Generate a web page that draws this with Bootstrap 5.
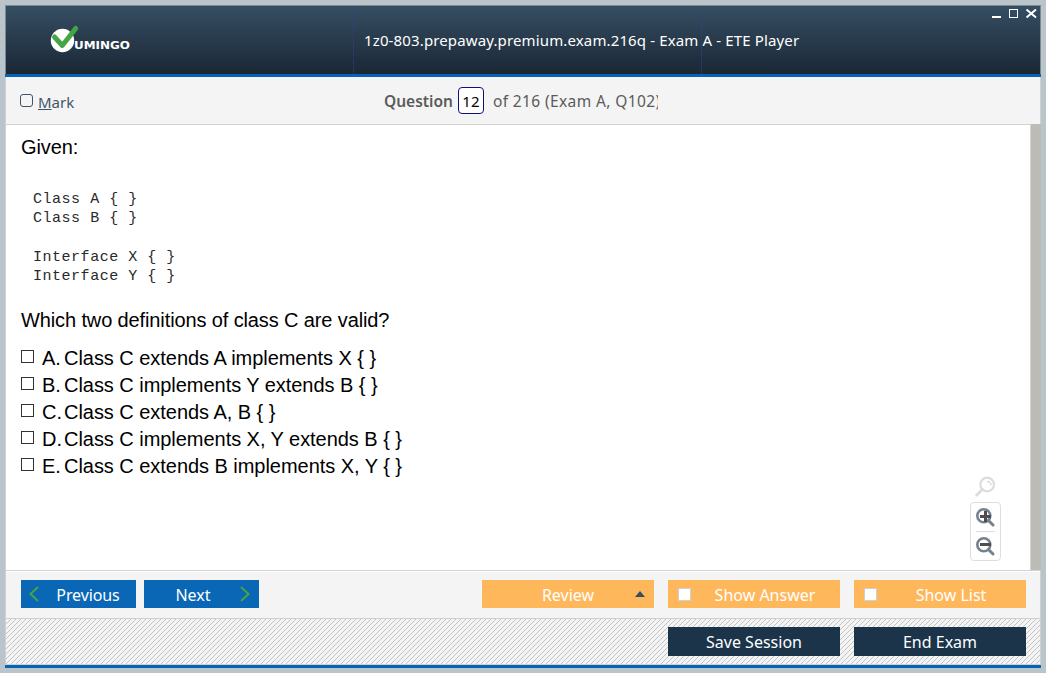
<!DOCTYPE html>
<html lang="en">
<head>
<meta charset="utf-8">
<meta name="viewport" content="width=device-width, initial-scale=1">
<title>ETE Player</title>
<link href="https://cdn.jsdelivr.net/npm/bootstrap@5.3.0/dist/css/bootstrap.min.css" rel="stylesheet">
<style>
  body { height: 100vh; background: #b9c5cb; padding: 5px; overflow: hidden; font-family: "Noto Sans", sans-serif; }
  .player { height: 663px; border-left: 1px solid #d0d2d2; border-right: 1px solid #d0d2d2; }
  .titlebar { height: 69px; border-top: 1px solid #7d8b8f; background: linear-gradient(#364e63, #1a2735); box-shadow: -1px 0 #7d8b8f, 1px 0 #7d8b8f; }
  .blue-line { height: 3px; background: #0664b4; margin: 0 -1px; }
  .title-cell { width: 348px; border-right: 1px dotted #34407f; }
  .brand-mark { display: block; margin: 17px 0 0 43px; }
  .exam-title { color: #fff; font-size: 15px; letter-spacing: .135px; line-height: 20px; padding: 24px 0 0 10px; white-space: nowrap; }
  .win-tools { top: 3px; right: 2px; }
  .question-bar { height: 48px; background: #f4f4f4; border-bottom: 1px solid #d2d2d2; color: #5b5b5b; font-size: 15.5px; line-height: 22px; padding-bottom: 1px; }
  .mark-toggle { width: 378px; padding-left: 14px; color: #3f546a; }
  .tick { width: 13px; height: 13px; border: 1px solid #333; background: #fff; flex: none; }
  .tick-mark { border-color: #3f546a; border-radius: 3px; background: transparent; margin: 1px 5px 0 0; }
  .mark-label { font-size: 15px; padding-top: 4px; }
  .q-word { padding-top: 2px; }
  .q-input { width: 26px; height: 27px; border: 1px solid #10107c; border-radius: 4px; background: #fff; color: #000; font-size: 15px; line-height: 27px; text-align: center; margin: 0 9px 0 5px; }
  .q-clip { width: 165px; overflow: hidden; white-space: nowrap; letter-spacing: .38px; padding-top: 2px; }
  .page-area { height: 446px; background: #fff; border-bottom: 1px solid #d2d2d2; font: 20px/27px "Liberation Sans", Arial, sans-serif; color: #000; }
  .page-text { padding: 9px 0 0 15px; }
  .snug { letter-spacing: -.12px; }
  .code-text { font: 15px/19.3px "Liberation Mono", monospace; letter-spacing: .52px; color: #2a2a2a; margin: 29px 0 21px 12px; overflow: visible; }
  .options { margin-top: 11px; letter-spacing: -.04px; }
  .options .tick { margin: 5px 8px 0 0; }
  .opt-letter { width: 22px; }
  .scroll-rail { width: 11px; background: #bcbbb6; border-left: 1px solid #d4d4d2; margin: -1px -1px 0 0; }
  .zoom-tools { width: 31px; margin: 350px 29px 0 0; }
  .zoom-tools svg { display: block; }
  .zoom-box { height: 59px; border: 1px solid #dedede; border-radius: 4px; margin-top: 5px; padding: 4px 5px 0; }
  .zoom-rule { height: 1px; background: #dcdcdc; margin: 4px 0; }
  .nav-strip { height: 47px; background: #f4f4f4; border-top: 1px solid #fff; padding: 8px 14px 0 15px; }
  .action-group { gap: 14px; }
  .session-strip { height: 47px; border-top: 1px solid #d0d0d0; border-bottom: 1px solid #d0d0d0; padding: 8px 14px 0 0; gap: 14px;
    background: #f4f4f4 url("data:image/svg+xml,%3Csvg xmlns='http://www.w3.org/2000/svg' width='5' height='5' shape-rendering='crispEdges'%3E%3Cpath fill='%23c3c3c3' d='M4 0h1v1H4zM3 1h1v1H3zM2 2h1v1H2zM1 3h1v1H1zM0 4h1v1H0z'/%3E%3C/svg%3E"); }
  .flat-btn { height: 28px; border: 0; border-radius: 0; padding: 0; color: #fff; font-size: 16px; line-height: 30px; position: relative; }
  .flat-btn:hover { color: #fff; }
  .nav-btn, .nav-btn:hover { width: 115px; background: #0967b6; }
  .prev-btn { padding-left: 19px; letter-spacing: -.1px; }
  .next-btn { padding-right: 17px; }
  .orange-btn, .orange-btn:hover { width: 172px; background: #ffb75c; }
  .has-box { padding-left: 22px; }
  .dark-btn, .dark-btn:hover { width: 172px; height: 29px; background: #1b344a; }
  .box-in { left: 10px; top: 8px; width: 13px; height: 13px; border: 1px solid #d0d0d0; background: #fff; }
  .chev { top: 6px; }
  .chev-left { left: 8px; }
  .chev-right { right: 9px; }
  .up-arrow { right: 9px; top: 11px; }
</style>
</head>
<body>
<div class="player d-flex flex-column">
  <header class="titlebar d-flex position-relative flex-shrink-0">
    <div class="title-cell flex-shrink-0">
      <svg class="brand-mark" width="84" height="34" viewBox="49 23 84 34">
        <circle cx="62.5" cy="40.5" r="11.7" fill="#fff"/>
        <path d="M54.5 37 L62.3 45.5 L75.7 28.5" fill="none" stroke="#45a545" stroke-width="5" stroke-linecap="round" stroke-linejoin="round"/>
        <text x="74" y="49" font-family="DejaVu Sans" font-weight="bold" font-size="9.6" textLength="56" lengthAdjust="spacingAndGlyphs" fill="#fff">UMINGO</text>
      </svg>
    </div>
    <div class="title-cell flex-shrink-0"><div class="exam-title">1z0-803.prepaway.premium.exam.216q - Exam A - ETE Player</div></div>
    <svg class="win-tools position-absolute" width="46" height="12" viewBox="0 0 46 12">
      <path d="M0 8h9" stroke="#fff" stroke-width="2"/>
      <rect x="17.5" y=".5" width="8" height="8" fill="none" stroke="#fff"/>
      <path d="M34.500 .5l9.500 8M44 .5l-9.500 8" stroke="#fff" stroke-width="2"/>
    </svg>
  </header>
  <div class="blue-line flex-shrink-0"></div>
  <div class="question-bar d-flex align-items-center flex-shrink-0">
    <div class="mark-toggle d-flex align-items-center"><span class="tick tick-mark"></span><span class="mark-label"><u>M</u>ark</span></div>
    <span class="q-word fw-semibold">Question</span>
    <span class="q-input">12</span>
    <span class="q-clip">of 216 (Exam A, Q102)</span>
  </div>
  <main class="page-area d-flex flex-shrink-0">
    <div class="page-text flex-grow-1">
      <div class="snug">Given:</div>
      <pre class="code-text">Class A { }
Class B { }

Interface X { }
Interface Y { }</pre>
      <div class="snug">Which two definitions of class C are valid?</div>
      <div class="options">
        <div class="d-flex"><span class="tick"></span><span class="opt-letter">A.</span><span>Class C extends A implements X { }</span></div>
        <div class="d-flex"><span class="tick"></span><span class="opt-letter">B.</span><span>Class C implements Y extends B { }</span></div>
        <div class="d-flex"><span class="tick"></span><span class="opt-letter">C.</span><span>Class C extends A, B { }</span></div>
        <div class="d-flex"><span class="tick"></span><span class="opt-letter">D.</span><span>Class C implements X, Y extends B { }</span></div>
        <div class="d-flex"><span class="tick"></span><span class="opt-letter">E.</span><span>Class C extends B implements X, Y { }</span></div>
      </div>
    </div>
    <div class="zoom-tools">
      <svg width="31" height="22" viewBox="0 0 31 22" fill="none" stroke="#dcdcdc" stroke-linecap="round">
        <circle cx="17.200" cy="9.500" r="6.800" stroke-width="2.200"/>
        <path d="M12.300 14.500L6.800 20" stroke-width="3"/>
        <path d="M17.500 6.500a3.500 3.500 0 0 1 3.500 3.500" stroke-width="1.500"/>
      </svg>
      <div class="zoom-box">
        <svg width="19" height="20" viewBox="0 0 19 20" fill="none">
          <circle cx="7.800" cy="8.700" r="6.500" stroke="#74828f" stroke-width="2.600"/>
          <path d="M12.500 13.500l4.500 4.500" stroke="#74828f" stroke-width="3" stroke-linecap="round"/>
          <path d="M4 9.500h11M9.500 4v11" stroke="#4e4e4e" stroke-width="3"/>
        </svg>
        <div class="zoom-rule"></div>
        <svg width="19" height="20" viewBox="0 0 19 20" fill="none">
          <circle cx="7.800" cy="8.700" r="6.500" stroke="#74828f" stroke-width="2.600"/>
          <path d="M12.500 13.500l4.500 4.500" stroke="#74828f" stroke-width="3" stroke-linecap="round"/>
          <path d="M4 8.500h11" stroke="#4e4e4e" stroke-width="3"/>
        </svg>
      </div>
    </div>
    <div class="scroll-rail"></div>
  </main>
  <footer>
    <div class="nav-strip d-flex justify-content-between">
      <div class="d-flex gap-2">
        <button class="btn flat-btn nav-btn prev-btn"><svg class="chev chev-left position-absolute" width="10" height="16" viewBox="0 0 10 16" fill="none" stroke="#45a545" stroke-width="2"><path d="M9 1L1.500 8 9 15"/></svg>Previous</button>
        <button class="btn flat-btn nav-btn next-btn">Next<svg class="chev chev-right position-absolute" width="10" height="16" viewBox="0 0 10 16" fill="none" stroke="#45a545" stroke-width="2"><path d="M1 1l7.500 7L1 15"/></svg></button>
      </div>
      <div class="action-group d-flex">
        <button class="btn flat-btn orange-btn">Review<svg class="up-arrow position-absolute" width="10" height="6" viewBox="0 0 10 6"><path d="M0 6L5 0l5 6z" fill="#364e63"/></svg></button>
        <button class="btn flat-btn orange-btn has-box"><span class="box-in position-absolute"></span>Show Answer</button>
        <button class="btn flat-btn orange-btn has-box"><span class="box-in position-absolute"></span>Show List</button>
      </div>
    </div>
    <div class="session-strip d-flex justify-content-end">
      <button class="btn flat-btn dark-btn">Save Session</button>
      <button class="btn flat-btn dark-btn">End Exam</button>
    </div>
    <div class="blue-line"></div>
  </footer>
</div>
<script src="https://cdn.jsdelivr.net/npm/bootstrap@5.3.0/dist/js/bootstrap.bundle.min.js"></script>
</body>
</html>
